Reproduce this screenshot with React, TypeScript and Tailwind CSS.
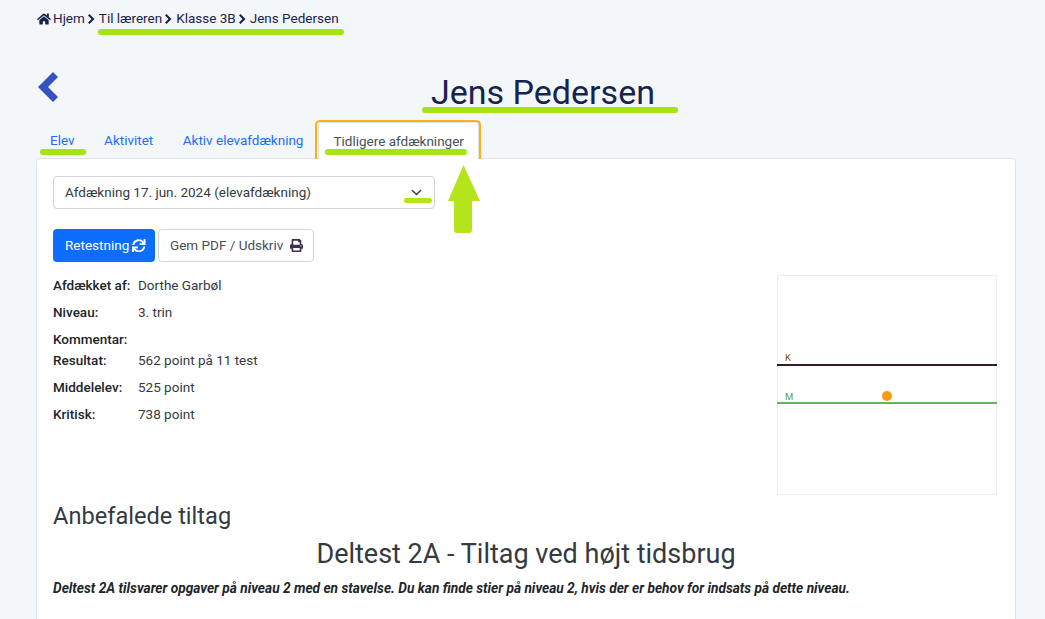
import React from "react";
import { FaHome, FaPrint, FaSync } from "react-icons/fa";

const crumbs = ["Til læreren", "Klasse 3B", "Jens Pedersen"];

const rows = [
  { label: "Afdækket af:", value: "Dorthe Garbøl", cls: "h-[27px]" },
  { label: "Niveau:", value: "3. trin", cls: "h-[27px]" },
  { label: "Kommentar:", value: "", cls: "h-[21px]" },
  { label: "Resultat:", value: "562 point på 11 test", cls: "h-[27px]" },
  { label: "Middelelev:", value: "525 point", cls: "h-[27px]" },
  { label: "Kritisk:", value: "738 point", cls: "h-[27px]" },
];

const Mark = ({ className }: { className: string }) => (
  <div className={"absolute z-20 h-[6px] rounded-full bg-[#a6e313] " + className} />
);

const Chart = () => (
  <div className="w-[220px] h-[220px] border border-[#eeeeee] bg-white shrink-0">
    <svg className="overflow-visible" width="218" height="218" viewBox="0 0 218 218">
      <line x1="-1" x2="219" y1="89" y2="89" stroke="#3a1a22" strokeWidth="2" />
      <line x1="-1" x2="219" y1="127" y2="127" stroke="#66b35f" strokeWidth="2" />
      <text x="7" y="85" fontSize="9.5" fill="#8a4b00" fontFamily="Roboto, sans-serif">K</text>
      <text x="7" y="124" fontSize="9.5" fill="#5d9e45" fontFamily="Roboto, sans-serif">M</text>
      <circle cx="109" cy="120" r="6" fill="#ffffff" />
      <circle cx="109" cy="120" r="5" fill="#f89c14" />
    </svg>
  </div>
);

const CrumbArrow = () => (
  <svg className="ml-[3px] mr-[4px] shrink-0" width="7" height="10" viewBox="0 0 7 10" fill="currentColor">
    <polygon points="0,1.5 1.5,0 6.5,5 1.5,10 0,8.5 3.5,5" />
  </svg>
);

export default function App() {
  return (
    <div className="relative h-[619px] overflow-hidden bg-[#f4f7f9] pl-9 pr-[29px] font-['Roboto',sans-serif] text-[13.5px] text-[#212529]">
      <nav className="flex h-[37px] items-center text-[#1a2348]">
        <FaHome className="ml-[1px] text-[14px]" />
        <span className="ml-[2px]">Hjem</span>
        {crumbs.map((c) => (
          <React.Fragment key={c}>
            <CrumbArrow />
            <span>{c}</span>
          </React.Fragment>
        ))}
      </nav>

      <div className="relative mt-[32px] flex h-[44px] items-center justify-center">
        <svg className="absolute left-[2px] top-[3px]" width="20" height="30" viewBox="0 0 20 30" fill="#3452c1">
          <polygon points="0,15 15,0 20,5 10,15 20,25 15,30" />
        </svg>
        <h1 className="ml-[34px] pt-[2px] text-[34px] leading-[44px] font-normal text-[#17234f]">Jens Pedersen</h1>
      </div>

      <div className="mt-[9px] flex h-[36px] items-stretch text-[#1a6efc]">
        <a className="flex items-center px-[14px] pt-[1px]">Elev</a>
        <a className="ml-[1px] flex items-center px-[14.5px] pt-[1px]">Aktivitet</a>
        <a className="flex items-center px-[15px] pt-[1px]">Aktiv elevafdækning</a>
        <a className="z-10 flex h-[37px] items-center rounded-t-[4px] border border-b-0 border-[#dfe3e7] bg-white px-[14px] text-[#495057]">
          Tidligere afdækninger
        </a>
      </div>

      <section className="h-[600px] rounded-t-[4px] border border-[#dfe3e7] bg-white px-4 pt-[17px] pb-4">
        <div className="flex h-[33px] w-[382px] items-center justify-between rounded-[4px] border border-[#ced4da] pl-[11px] pr-[12px] text-[#343a40]">
          <span>Afdækning 17. jun. 2024 (elevafdækning)</span>
          <svg width="11" height="11" viewBox="0 0 16 16" fill="none" stroke="#343a40" strokeWidth="2" strokeLinecap="round" strokeLinejoin="round">
            <path d="M2 5l6 6 6-6" />
          </svg>
        </div>

        <div className="mt-[20px] flex gap-[3px]">
          <button className="flex h-[33px] w-[102px] items-center gap-[3px] rounded-[4px] bg-[#0d6efd] pl-[12px] text-white">
            Retestning <FaSync className="text-[13.5px]" />
          </button>
          <button className="flex h-[33px] w-[156px] items-center gap-[7px] rounded-[4px] border border-[#ced4da] bg-white pl-[11px] text-[#495057]">
            Gem PDF / Udskriv <FaPrint className="text-[13px] text-[#3b3050]" />
          </button>
        </div>

        <div className="mt-[13px] flex justify-between pr-[2px]">
          <div>
            {rows.map((r) => (
              <div key={r.label} className={"flex leading-[21px] " + r.cls}>
                <span className="w-[85px] font-medium">{r.label}</span>
                <span className="text-[#343a40]">{r.value}</span>
              </div>
            ))}
          </div>
          <Chart />
        </div>

        <h2 className="mt-[5px] text-[23.6px] leading-[32px] font-normal text-[#343a40]">Anbefalede tiltag</h2>
        <h2 className="mt-[5px] text-center text-[27px] leading-[34px] font-normal text-[#343a40]">
          Deltest 2A - Tiltag ved højt tidsbrug
        </h2>
        <p className="mt-[7px] text-[13.7px] leading-[21px] font-bold italic text-[#212529]">
          Deltest 2A tilsvarer opgaver på niveau 2 med en stavelse. Du kan finde stier på niveau 2, hvis der er behov for indsats på dette niveau.
        </p>
      </section>

      {/* annotations drawn on top of the screenshot */}
      <Mark className="left-[98px] top-[29px] w-[246px]" />
      <Mark className="left-[422px] top-[107px] w-[256px]" />
      <Mark className="left-[40px] top-[149px] w-[46px]" />
      <Mark className="left-[325px] top-[149px] w-[142px]" />
      <div className="absolute z-20 left-[315px] top-[120px] h-[39px] w-[166px] rounded-t-[5px] border-[2px] border-b-0 border-[#fdb012]" />
      <div className="absolute left-[404px] top-[198px] h-[5px] w-[28px] rounded-full bg-[#b4e41a]" />
      <svg className="absolute z-20 left-[447px] top-[164px]" width="34" height="70" viewBox="0 0 34 70">
        <path d="M16.5 1L33 37H25V66q0 3-3 3H10q-3 0-3-3V37H1Z" fill="#b4e41a" />
      </svg>
    </div>
  );
}
